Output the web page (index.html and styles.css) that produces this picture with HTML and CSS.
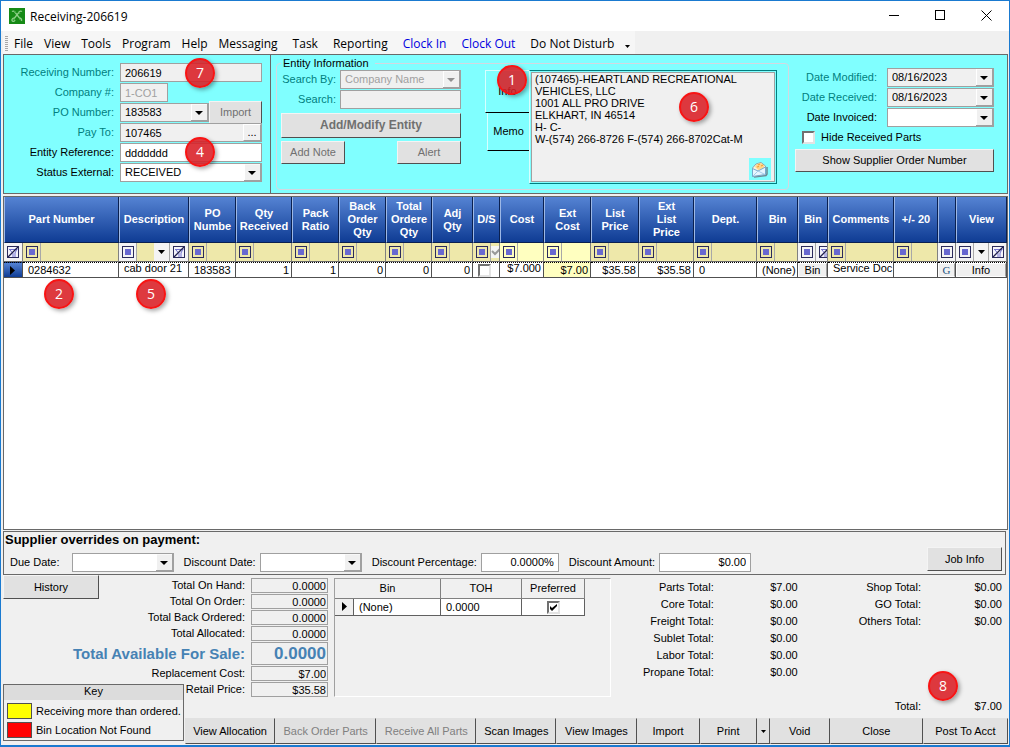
FILE: index.html
```html
<!DOCTYPE html>
<html lang="en">
<head>
    <meta charset="UTF-8">
    <meta name="viewport" content="width=device-width, initial-scale=1.0">
    <title>Receiving-206619</title>
    <link rel="stylesheet" href="styles.css">
</head>
<body>
    <svg class="symbols" aria-hidden="true">
        <symbol id="op" viewBox="0 0 12 12">
            <rect x="0.5" y="0.5" width="11" height="11" fill="none" stroke="#2b2b5c"/>
            <rect x="3" y="3" width="6" height="6" fill="#6868d0"/>
        </symbol>
        <symbol id="funnel" viewBox="0 0 13 13">
            <rect x="0.5" y="0.5" width="11" height="11" fill="#f4f4fa" stroke="#2b2b5c"/>
            <path d="M2 3.500h8.500M3 4l3 3.500V11M9.500 4L8 7v4" fill="none" stroke="#7272d0"/>
            <path d="M1 11L11 1" stroke="#20204c" stroke-width="1.300"/>
        </symbol>
        <symbol id="down" viewBox="0 0 7 4">
            <path d="M0 0h7L3.500 4z"/>
        </symbol>
        <symbol id="right" viewBox="0 0 5 9">
            <path d="M0 0l5 4.500L0 9z"/>
        </symbol>
    </svg>

    <div class="window">
        <header class="titlebar">
            <svg class="logo" viewBox="0 0 16 16" aria-hidden="true">
                <rect width="16" height="16" fill="#168a16"/>
                <path d="M3 3.500c1.500-1 3 0 3.500 1.500l4 5c1.500 0 2.500 1.500 2 3M13 3.500c-1.500-1-3 0-3.500 1.500l-4 5c-1.500 0-3 1-2.500 2.500s2.500 1 3-.5" fill="none" stroke="#8fd08a" stroke-width="1.300"/>
                <path d="M5 3l2 2M10 4l1 2M4 11l2 1M10 11l2 1" stroke="#4fae4f"/>
            </svg>
            <h1>Receiving-206619</h1>
            <div class="controls">
                <button aria-label="Minimize"><svg width="11" height="11" viewBox="0 0 11 11"><path d="M0 5.500h10" stroke="#000"/></svg></button>
                <button aria-label="Maximize"><svg width="11" height="11" viewBox="0 0 11 11"><rect x="0.500" y="0.500" width="9" height="9" fill="none" stroke="#000"/></svg></button>
                <button aria-label="Close window"><svg width="11" height="11" viewBox="0 0 11 11"><path d="M0.500 0.500l10 10M10.500 0.500l-10 10" stroke="#000"/></svg></button>
            </div>
        </header>

        <nav class="menubar">
            <div class="menu">
                <span class="grip"></span>
                <a href="#">File</a>
                <a href="#">View</a>
                <a href="#">Tools</a>
                <a href="#">Program</a>
                <a href="#">Help</a>
                <a href="#" class="wide">Messaging</a>
                <a href="#" class="wide">Task</a>
                <a href="#" class="wide">Reporting</a>
                <a href="#" class="wide clock">Clock In</a>
                <a href="#" class="wide clock">Clock Out</a>
                <a href="#">Do Not Disturb</a>
                <svg class="more" width="5" height="3"><use href="#down"/></svg>
            </div>
        </nav>

        <section class="top">
            <form class="receiving">
                <label class="locked" for="recNum">Receiving Number:</label>
                <input class="field gray" id="recNum" value="206619" readonly>
                <label class="locked" for="company">Company #:</label>
                <input class="field gray short" id="company" value="1-CO1" disabled>
                <label class="locked" for="po">PO Number:</label>
                <div class="pair">
                    <select class="field gray" id="po"><option>183583</option></select>
                    <button type="button" class="btn" disabled>Import</button>
                </div>
                <label class="locked" for="payTo">Pay To:</label>
                <div class="pair browse">
                    <input class="field gray" id="payTo" value="107465" readonly>
                    <button type="button" class="dots" aria-label="Browse">...</button>
                </div>
                <label for="entRef">Entity Reference:</label>
                <input class="field" id="entRef" value="ddddddd">
                <label for="status">Status External:</label>
                <select class="field" id="status"><option>RECEIVED</option></select>
            </form>

            <div class="entity">
                <fieldset>
                    <legend>Entity Information</legend>
                    <div class="search">
                        <label class="locked" for="searchBy">Search By:</label>
                        <select class="field gray" id="searchBy" disabled><option>Company Name</option></select>
                        <label class="locked" for="search">Search:</label>
                        <input class="field gray" id="search">
                        <button type="button" class="btn modify" disabled>Add/Modify Entity</button>
                        <div class="notes">
                            <button type="button" class="btn" disabled>Add Note</button>
                            <button type="button" class="btn" disabled>Alert</button>
                        </div>
                    </div>
                    <div class="tabs">
                        <button type="button" class="tab active">Info</button>
                        <button type="button" class="tab">Memo</button>
                    </div>
                    <div class="info">
                        <textarea aria-label="Info" readonly>(107465)-HEARTLAND RECREATIONAL
VEHICLES, LLC
1001 ALL PRO DRIVE
ELKHART, IN 46514
H- C-
W-(574) 266-8726 F-(574) 266-8702Cat-M</textarea>
                        <button type="button" class="mail" aria-label="Mail">
                            <svg width="17" height="17" viewBox="0 0 17 17">
                                <path d="M3 16l12-1.500L16 13V6" fill="none" stroke="#6a8a94" stroke-width="1.500"/>
                                <path d="M1.500 7L5 3l5-1.500L14.500 5v8.500l-13 2z" fill="#fdf3dc" stroke="#8fa4a8"/>
                                <path d="M4 6l2-3 4-1 3.500 3-1 2-5 2z" fill="#ffd68a"/>
                                <path d="M7 4l2-1M10 5l2-1M6 6l2-.5" stroke="#f09a30"/>
                                <path d="M1.500 7.500L7 10l7.500-4v7.500l-13 2z" fill="#e6f6ff" stroke="#78a8cc"/>
                                <path d="M2 15l5-5 7 3.500" fill="none" stroke="#a4cdea"/>
                            </svg>
                        </button>
                    </div>
                </fieldset>

                <div class="dates">
                    <label class="locked" for="modified">Date Modified:</label>
                    <select class="field gray" id="modified"><option>08/16/2023</option></select>
                    <label class="locked" for="received">Date Received:</label>
                    <select class="field gray" id="received"><option>08/16/2023</option></select>
                    <label for="invoiced">Date Invoiced:</label>
                    <select class="field" id="invoiced"><option></option></select>
                    <label class="check"><input type="checkbox" class="box"> Hide Received Parts</label>
                    <button type="button" class="btn order">Show Supplier Order Number</button>
                </div>
            </div>
        </section>

        <main class="parts">
            <table class="grid">
                <colgroup>
                    <col class="w19"><col class="w96"><col class="w70"><col class="w47"><col class="w56"><col class="w47"><col class="w47">
                    <col class="w46"><col class="w41"><col class="w27"><col class="w44"><col class="w47"><col class="w48"><col class="w55">
                    <col class="w63"><col class="w41"><col class="w30"><col class="w66"><col class="w44"><col class="w18"><col class="w51">
                </colgroup>
                <thead>
                    <tr>
                        <th colspan="2">Part Number</th>
                        <th>Description</th>
                        <th>PO<br>Numbe</th>
                        <th>Qty<br>Received</th>
                        <th>Pack<br>Ratio</th>
                        <th>Back<br>Order<br>Qty</th>
                        <th>Total<br>Ordere<br>Qty</th>
                        <th>Adj<br>Qty</th>
                        <th>D/S</th>
                        <th>Cost</th>
                        <th>Ext<br>Cost</th>
                        <th>List<br>Price</th>
                        <th>Ext<br>List<br>Price</th>
                        <th>Dept.</th>
                        <th>Bin</th>
                        <th>Bin</th>
                        <th>Comments</th>
                        <th>+/- 20</th>
                        <th></th>
                        <th>View</th>
                    </tr>
                </thead>
                <tbody>
                    <tr class="filters">
                        <td class="plain"><div><svg class="fn"><use href="#funnel"/></svg></div></td>
                        <td><div><span class="op"><svg><use href="#op"/></svg></span></div></td>
                        <td><div><span class="op lit"><svg><use href="#op"/></svg></span><span class="drop"><svg width="7" height="4"><use href="#down"/></svg></span><span class="clear"><svg class="fn"><use href="#funnel"/></svg></span></div></td>
                        <td><div><span class="op"><svg><use href="#op"/></svg></span></div></td>
                        <td><div><span class="op"><svg><use href="#op"/></svg></span></div></td>
                        <td><div><span class="op"><svg><use href="#op"/></svg></span></div></td>
                        <td><div><span class="op"><svg><use href="#op"/></svg></span></div></td>
                        <td><div><span class="op"><svg><use href="#op"/></svg></span></div></td>
                        <td><div><span class="op"><svg><use href="#op"/></svg></span></div></td>
                        <td><div><span class="op"><svg><use href="#op"/></svg></span><svg class="tick" viewBox="0 0 9 12"><rect width="9" height="12" fill="#f4f4f4"/><path d="M1 5l3 3 5-5" fill="none" stroke="#999" stroke-width="2"/></svg></div></td>
                        <td class="pale"><div><span class="op"><svg><use href="#op"/></svg></span></div></td>
                        <td class="pale"><div><span class="op"><svg><use href="#op"/></svg></span></div></td>
                        <td><div><span class="op"><svg><use href="#op"/></svg></span></div></td>
                        <td><div><span class="op"><svg><use href="#op"/></svg></span></div></td>
                        <td><div><span class="op"><svg><use href="#op"/></svg></span></div></td>
                        <td><div><span class="op"><svg><use href="#op"/></svg></span></div></td>
                        <td class="plain"><div><span class="op"><svg><use href="#op"/></svg></span><svg class="fn"><use href="#funnel"/></svg></div></td>
                        <td><div><span class="op"><svg><use href="#op"/></svg></span></div></td>
                        <td><div><span class="op"><svg><use href="#op"/></svg></span></div></td>
                        <td class="plain"><div><span class="op"><svg><use href="#op"/></svg></span></div></td>
                        <td class="plain"><div><span class="op"><svg><use href="#op"/></svg></span><span class="drop"><svg width="7" height="4"><use href="#down"/></svg></span><span class="clear"><svg class="fn"><use href="#funnel"/></svg></span></div></td>
                    </tr>
                    <tr class="row">
                        <td class="current"><svg width="5" height="9"><use href="#right"/></svg></td>
                        <td>0284632</td>
                        <td class="up">cab door 21</td>
                        <td class="in">183583</td>
                        <td class="num">1</td>
                        <td class="num">1</td>
                        <td class="num">0</td>
                        <td class="num">0</td>
                        <td class="num">0</td>
                        <td class="mark"><input type="checkbox" class="box" aria-label="D/S"></td>
                        <td class="num up">$7.000</td>
                        <td class="num pale">$7.00</td>
                        <td class="num">$35.58</td>
                        <td class="num">$35.58</td>
                        <td>0</td>
                        <td class="in">(None)</td>
                        <td class="cell-btn"><button>Bin</button></td>
                        <td class="up">Service Doc</td>
                        <td></td>
                        <td class="cell-btn go"><button>G</button></td>
                        <td class="cell-btn"><button>Info</button></td>
                    </tr>
                </tbody>
            </table>
        </main>

        <section class="overrides">
            <h2>Supplier overrides on payment:</h2>
            <div class="terms">
                <label for="due">Due Date:</label>
                <select class="field" id="due"><option></option></select>
                <label for="discDate">Discount Date:</label>
                <select class="field" id="discDate"><option></option></select>
                <label for="discPct">Discount Percentage:</label>
                <input class="field pct" id="discPct" value="0.0000%">
                <label for="discAmt">Discount Amount:</label>
                <input class="field amt" id="discAmt" value="$0.00">
                <button class="btn job">Job Info</button>
            </div>
        </section>

        <section class="bottom">
            <div class="stock">
                <label for="onHand">Total On Hand:</label><input id="onHand" value="0.0000" readonly>
                <label for="onOrder">Total On Order:</label><input id="onOrder" value="0.0000" readonly>
                <label for="backOrd">Total Back Ordered:</label><input id="backOrd" value="0.0000" readonly>
                <label for="alloc">Total Allocated:</label><input id="alloc" value="0.0000" readonly>
                <label class="big" for="avail">Total Available For Sale:</label><input class="big" id="avail" value="0.0000" readonly>
                <label for="repl">Replacement Cost:</label><input id="repl" value="$7.00" readonly>
                <label for="retail">Retail Price:</label><input id="retail" value="$35.58" readonly>
            </div>

            <div class="side">
                <button class="btn history">History</button>
                <div class="key">
                    <h3>Key</h3>
                    <p><span class="swatch yellow"></span>Receiving more than ordered.</p>
                    <p><span class="swatch red"></span>Bin Location Not Found</p>
                </div>
            </div>

            <div class="bins">
                <table>
                    <colgroup><col class="w19"><col class="w87"><col class="w81"><col class="w63"></colgroup>
                    <thead>
                        <tr><th colspan="2">Bin</th><th>TOH</th><th>Preferred</th></tr>
                    </thead>
                    <tbody>
                        <tr>
                            <td class="sel"><svg width="5" height="9"><use href="#right"/></svg></td>
                            <td>(None)</td>
                            <td>0.0000</td>
                            <td class="mark"><input type="checkbox" class="box" aria-label="Preferred" checked></td>
                        </tr>
                    </tbody>
                </table>
            </div>

            <dl class="sums parts-sums">
                <dt>Parts Total:</dt><dd>$7.00</dd>
                <dt>Core Total:</dt><dd>$0.00</dd>
                <dt>Freight Total:</dt><dd>$0.00</dd>
                <dt>Sublet Total:</dt><dd>$0.00</dd>
                <dt>Labor Total:</dt><dd>$0.00</dd>
                <dt>Propane Total:</dt><dd>$0.00</dd>
            </dl>

            <dl class="sums shop-sums">
                <dt>Shop Total:</dt><dd>$0.00</dd>
                <dt>GO Total:</dt><dd>$0.00</dd>
                <dt>Others Total:</dt><dd>$0.00</dd>
                <dt class="total">Total:</dt><dd class="total">$7.00</dd>
            </dl>

            <footer class="toolbar">
                <button>View Allocation</button>
                <button disabled>Back Order Parts</button>
                <button disabled>Receive All Parts</button>
                <button>Scan Images</button>
                <button>View Images</button>
                <button>Import</button>
                <button>Print</button>
                <button class="arrow" aria-label="Print options"><svg width="5" height="3"><use href="#down"/></svg></button>
                <button>Void</button>
                <button>Close</button>
                <button>Post To Acct</button>
            </footer>
        </section>

        <span class="pin pin1">1</span>
        <span class="pin pin2">2</span>
        <span class="pin pin4">4</span>
        <span class="pin pin5">5</span>
        <span class="pin pin6">6</span>
        <span class="pin pin7">7</span>
        <span class="pin pin8">8</span>
    </div>
</body>
</html>
```
FILE: styles.css
```css
* {
    box-sizing: border-box;
}

body {
    margin: 0;
    font-family: "Liberation Sans", Arial, sans-serif;
    font-size: 11px;
    line-height: 13px;
    color: #000;
}

button, input, select, textarea {
    font: inherit;
    color: inherit;
    margin: 0;
    border-radius: 0;
}

h1, h2, h3, p, dl, dd {
    margin: 0;
    font-weight: normal;
}

.symbols {
    position: absolute;
    width: 0;
    height: 0;
}

.window {
    position: relative;
    display: flex;
    flex-direction: column;
    min-height: 100vh;
    background: #f0f0f0;
    border: 1px solid #1a7ad0;
    border-bottom-width: 2px;
}

/* title bar and menu */
.titlebar {
    display: flex;
    align-items: center;
    height: 30px;
    padding-left: 8px;
    background: #fff;
    font-family: "Open Sans", sans-serif;
}

.logo {
    width: 16px;
    height: 16px;
    margin-right: 5px;
}

.titlebar h1 {
    font-size: 12px;
}

.controls {
    display: flex;
    margin-left: auto;
}

.controls button {
    width: 46px;
    height: 28px;
    padding: 0;
    border: none;
    background: none;
}

.menubar {
    display: flex;
    height: 23px;
    padding-left: 2px;
}

.menu {
    display: flex;
    align-items: center;
    padding: 2px 5px 0 2px;
    background: #f6f6f6;
    font-family: "Open Sans", sans-serif;
    font-size: 12px;
}

.menu a {
    margin-right: 11px;
    color: #000;
    text-decoration: none;
}

.menu a.wide {
    margin-right: 15px;
}

.menu a.clock {
    color: #0000e0;
}

.grip {
    width: 3px;
    height: 16px;
    margin-right: 6px;
    background: repeating-linear-gradient(#a8a8a8 0 1px, transparent 1px 2px);
}

.more {
    margin-top: 6px;
}

/* shared controls */
.field {
    width: 100%;
    height: 19px;
    padding: 0 4px;
    border: 1px solid #a0a0a0;
    background-color: #fff;
    outline: none;
}

.gray {
    background-color: #f0f0f0;
}

select.field {
    appearance: none;
    border-right-width: 2px;
    background-image: url("data:image/svg+xml,%3Csvg xmlns='http://www.w3.org/2000/svg' width='16' height='17'%3E%3Crect width='16' height='17' fill='%23f0f0f0'/%3E%3Cpath d='M0 0h16M.5 0v16' stroke='%23fff' fill='none'/%3E%3Cpath d='M0 16.500h16' stroke='%23a0a0a0'/%3E%3Cpath d='M4 7h8l-4 4z'/%3E%3C/svg%3E");
    background-repeat: no-repeat;
    background-position: right center;
}

.field:disabled {
    color: #a0a0a0;
    opacity: 1;
}

select.field:disabled {
    background-image: url("data:image/svg+xml,%3Csvg xmlns='http://www.w3.org/2000/svg' width='16' height='17'%3E%3Crect width='16' height='17' fill='%23f0f0f0'/%3E%3Cpath d='M0 0h16M.5 0v16' stroke='%23fff' fill='none'/%3E%3Cpath d='M0 16.500h16' stroke='%23a0a0a0'/%3E%3Cpath d='M4 7h8l-4 4z' fill='%23909090'/%3E%3C/svg%3E");
}

.btn {
    padding: 0;
    border: 1px solid #f4f4f4;
    border-right-color: #505050;
    border-bottom-color: #505050;
    background: #e1e1e1;
    text-align: center;
}

.btn:disabled {
    color: #707070;
}

.locked {
    color: #008080;
}

.box {
    appearance: none;
    width: 13px;
    height: 13px;
    border: 2px solid #e3e3e3;
    border-top-color: #707070;
    border-left-color: #707070;
    background: #fff;
}

.box:checked {
    background: #fff url("data:image/svg+xml,%3Csvg xmlns='http://www.w3.org/2000/svg' width='9' height='9'%3E%3Cpath d='M1 3v3l2 2 5-5V1L3 5z'/%3E%3C/svg%3E") center no-repeat;
}

/* cyan panels */
.top {
    display: flex;
    margin: 0 1px 2px 2px;
    height: 140px;
    border: 1px solid #696969;
    background: #80ffff;
}

.receiving {
    display: grid;
    grid-template-columns: 110px 142px;
    grid-auto-rows: 19px;
    align-items: center;
    gap: 1px 6px;
    width: 267px;
    padding-top: 8px;
    border-right: 1px solid #696969;
}

.receiving label,
.search label,
.dates label {
    text-align: right;
    white-space: nowrap;
}

.short {
    width: 48px;
}

.pair {
    display: flex;
    align-items: center;
    position: relative;
}

.pair .btn {
    flex: none;
    width: 53px;
    height: 23px;
}

.dots {
    position: absolute;
    top: 1px;
    right: 1px;
    width: 18px;
    height: 17px;
    padding: 0;
    border: 1px solid #fff;
    border-right-color: #a0a0a0;
    border-bottom-color: #a0a0a0;
    background: #f0f0f0;
}

.entity {
    flex: 1;
    display: flex;
    justify-content: space-between;
    padding: 2px 13px 3px 5px;
}

fieldset {
    display: flex;
    min-width: 0;
    margin: 0;
    padding: 0 11px 0 4px;
    border: 1px solid #d4d8e0;
    border-radius: 4px;
}

legend {
    padding: 0 6px 0 2px;
    font-size: 11px;
}

.search {
    display: grid;
    grid-template-columns: 55px 121px;
    grid-template-rows: 19px 19px 25px 23px;
    align-items: center;
    align-content: start;
    gap: 1px 4px;
    margin-right: 24px;
}

.modify {
    grid-column: 1 / -1;
    height: 25px;
    margin-top: 6px;
    font-size: 12px;
    font-weight: bold;
}

.notes {
    grid-column: 1 / -1;
    display: flex;
    justify-content: space-between;
    margin-top: 10px;
}

.notes .btn {
    width: 64px;
    height: 23px;
}

.tabs {
    display: flex;
    flex-direction: column;
    align-items: flex-end;
}

.tab {
    width: 42px;
    height: 38px;
    padding: 0;
    border: none;
    border-left: 1px solid #d8ffff;
    border-bottom: 1px solid #000;
    background: none;
}

.tab.active {
    width: 44px;
    height: 43px;
    border-top: 1px solid #d8ffff;
}

.info {
    position: relative;
    width: 248px;
    height: 114px;
    padding: 1px;
    border: 1px solid #008080;
    border-left-color: #d8ffff;
}

.info textarea {
    display: block;
    width: 100%;
    height: 100%;
    padding: 0 3px;
    border: 1px solid #a0a0a0;
    background: #f0f0f0;
    line-height: 12px;
    resize: none;
    outline: none;
}

.mail {
    position: absolute;
    right: 5px;
    bottom: 3px;
    width: 22px;
    height: 22px;
    padding: 2px;
    border: none;
    background: #80ffff;
}

.mail svg {
    display: block;
}

.dates {
    display: grid;
    grid-template-columns: 82px 107px;
    grid-template-rows: 19px 19px 19px 19px 23px;
    align-items: center;
    align-content: start;
    gap: 1px 10px;
    padding-top: 11px;
}

.dates .check {
    grid-column: 1 / -1;
    display: flex;
    align-items: center;
    gap: 6px;
    padding-left: 7px;
}

.order {
    grid-column: 1 / -1;
    height: 23px;
    margin-top: 2px;
}

/* parts grid */
.parts {
    flex: 1;
    margin: 0 1px 1px 2px;
    border: 1px solid #696969;
    background: #fff;
}

.grid {
    width: 100%;
    table-layout: fixed;
    border-collapse: separate;
    border-spacing: 0;
}

.w18 { width: 18px; }
.w19 { width: 19px; }
.w27 { width: 27px; }
.w30 { width: 30px; }
.w41 { width: 41px; }
.w44 { width: 44px; }
.w46 { width: 46px; }
.w47 { width: 47px; }
.w48 { width: 48px; }
.w51 { width: 51px; }
.w55 { width: 55px; }
.w56 { width: 56px; }
.w63 { width: 63px; }
.w66 { width: 66px; }
.w70 { width: 70px; }
.w81 { width: 81px; }
.w87 { width: 87px; }
.w96 { width: 96px; }

.grid th {
    height: 46px;
    padding: 0;
    border-left: 1px solid #9db8e6;
    border-right: 1px solid #0a2050;
    border-bottom: 1px solid #0a2050;
    background: linear-gradient(#5583d3, #0f3c94);
    color: #fff;
    white-space: nowrap;
}

.filters td {
    height: 19px;
    padding: 0;
    border-right: 1px solid #808080;
    border-bottom: 1px solid #696969;
    background: #eee8aa;
    overflow: hidden;
}

.filters div {
    display: flex;
    align-items: center;
    height: 18px;
}

.filters td.plain {
    background: #f4f4f4;
}

.filters td.pale,
.row td.pale {
    background: #ffffc0;
}

.op {
    flex: none;
    display: flex;
    align-items: center;
    width: 18px;
    height: 18px;
    padding-left: 3px;
    border-right: 1px solid #a8a8a8;
}

.op svg {
    width: 12px;
    height: 12px;
}

.op.lit,
.drop,
.clear {
    background: #f4f4f4;
}

.fn {
    flex: none;
    width: 13px;
    height: 13px;
    margin-left: 3px;
}

.tick {
    flex: none;
    width: 9px;
    height: 12px;
}

.drop {
    display: flex;
    align-items: center;
    justify-content: center;
    width: 16px;
    height: 18px;
    margin-left: auto;
    border-right: 1px solid #a8a8a8;
}

.clear {
    display: flex;
    align-items: center;
    width: 18px;
    height: 18px;
}

.row td {
    height: 16px;
    padding: 0 2px 0 5px;
    border-top: 1px dotted #000;
    border-bottom: 1px solid #505050;
    border-right: 1px solid #505050;
    line-height: 14px;
    white-space: nowrap;
    overflow: hidden;
}

.row td.num {
    text-align: right;
}

.row td.up {
    line-height: 11px;
    vertical-align: top;
}

.row td.current {
    padding-left: 6px;
    background: linear-gradient(#5583d3, #0f3c94);
    line-height: 9px;
}

.row td.current svg {
    vertical-align: middle;
}

.row td.mark {
    line-height: 0;
}

.row td.cell-btn {
    padding: 0;
}

.cell-btn button {
    display: block;
    width: 100%;
    height: 14px;
    padding: 0;
    border: 1px solid #fff;
    border-right-color: #a0a0a0;
    background: #f0f0f0;
    line-height: 12px;
}

.go button {
    font-family: "Liberation Serif", serif;
    color: #205080;
}

/* supplier overrides */
.overrides {
    height: 44px;
    margin: 0 3px 0 2px;
    padding: 1px 3px 0 1px;
    border: 1px solid #696969;
}

.overrides h2 {
    height: 15px;
    font-size: 13px;
    font-weight: bold;
}

.terms {
    display: flex;
    align-items: center;
    height: 24px;
    padding-left: 5px;
    padding-top: 4px;
}

.terms .field {
    width: 102px;
    margin: 0 10px 0 4px;
}

.terms #due {
    margin-left: 12px;
}

.terms .pct {
    width: 78px;
    text-align: right;
}

.terms .amt {
    width: 92px;
    text-align: right;
}

.job {
    width: 75px;
    height: 24px;
    margin-left: auto;
    margin-top: -6px;
}

/* bottom area */
.bottom {
    display: grid;
    grid-template-columns: 182px 143px 283fr 204fr 192fr;
    grid-template-rows: 143px 26px;
    margin: 0 1px 1px 2px;
}

.stock {
    grid-column: 1 / 3;
    grid-row: 1;
    display: grid;
    grid-template-columns: 1fr 77px;
    grid-template-rows: repeat(4, 15px) 23px 15px 15px;
    align-items: center;
    align-content: start;
    gap: 1px 6px;
    padding-top: 3px;
}

.stock label {
    text-align: right;
}

.stock input {
    width: 100%;
    height: 15px;
    padding: 0 1px;
    border: 1px solid #a0a0a0;
    background: #f0f0f0;
    text-align: right;
    outline: none;
}

.stock .big {
    font-size: 15px;
    font-weight: bold;
    color: #4682b4;
}

.stock input.big {
    height: 23px;
    font-size: 17px;
}

.side {
    grid-column: 1;
    grid-row: 1 / 3;
    display: flex;
    flex-direction: column;
    justify-content: space-between;
    align-items: flex-start;
    padding-bottom: 3px;
    pointer-events: none;
}

.history {
    width: 96px;
    height: 24px;
    pointer-events: auto;
}

.key {
    width: 181px;
    height: 57px;
    border: 1px solid #696969;
    background: #f0f0f0;
}

.key h3 {
    height: 15px;
    background: #dcdcdc;
    font-size: 11px;
    text-align: center;
}

.key p {
    display: flex;
    align-items: center;
    gap: 4px;
    height: 16px;
    margin: 3px 0 2px 3px;
    white-space: nowrap;
}

.swatch {
    width: 25px;
    height: 16px;
    border: 1px solid #505050;
}

.yellow {
    background: #ff0;
}

.red {
    background: #f00;
}

.bins {
    height: 119px;
    margin: 3px 0 0 6px;
    border: 1px solid #a0a0a0;
    border-right-color: #fff;
    border-bottom-color: #fff;
}

.bins table {
    width: 250px;
    table-layout: fixed;
    border-collapse: separate;
    border-spacing: 0;
}

.bins th {
    height: 20px;
    padding: 0;
    border-right: 1px solid #808080;
    border-bottom: 1px solid #808080;
    font-weight: normal;
}

.bins td {
    height: 17px;
    padding: 0 5px;
    border-right: 1px solid #606060;
    border-bottom: 1px solid #606060;
    background: #fff;
    line-height: 13px;
}

.bins td.sel {
    padding: 0 0 0 7px;
    background: #f0f0f0;
    line-height: 9px;
}

.bins td.mark {
    text-align: center;
    line-height: 0;
}

.sums {
    display: grid;
    grid-auto-rows: 17px;
    grid-template-columns: 1fr 84px;
    align-items: center;
    padding: 4px 18px 0 0;
    text-align: right;
}

.shop-sums {
    grid-template-columns: 1fr 81px;
    padding-right: 6px;
}

.sums .total {
    grid-row: 8;
}

.toolbar {
    grid-column: 2 / -1;
    grid-row: 2;
    display: grid;
    grid-template-columns: 90fr 101fr 100fr 80fr 80fr 63fr 57fr 13fr 60fr 93fr 85fr;
}

.toolbar button {
    padding: 0;
    border: 1px solid #e1e1e1;
    border-right-color: #505050;
    border-bottom-color: #505050;
    background: #e1e1e1;
    white-space: nowrap;
}

.toolbar button:disabled {
    color: #808080;
}

.toolbar .arrow svg {
    vertical-align: middle;
}

/* numbered callouts */
.pin {
    position: absolute;
    width: 30px;
    height: 30px;
    border: 2px solid #f81414;
    border-radius: 50%;
    background: rgba(218, 30, 36, 0.88);
    box-shadow: 2px 2px 4px rgba(0, 0, 0, 0.35);
    color: #fff;
    font-family: "Open Sans", sans-serif;
    font-size: 14px;
    line-height: 26px;
    text-align: center;
}

.pin1 { left: 496px; top: 64px; }
.pin2 { left: 43px; top: 278px; }
.pin4 { left: 184px; top: 136px; }
.pin5 { left: 135px; top: 278px; }
.pin6 { left: 678px; top: 91px; }
.pin7 { left: 184px; top: 57px; }
.pin8 { left: 927px; top: 670px; }
```
